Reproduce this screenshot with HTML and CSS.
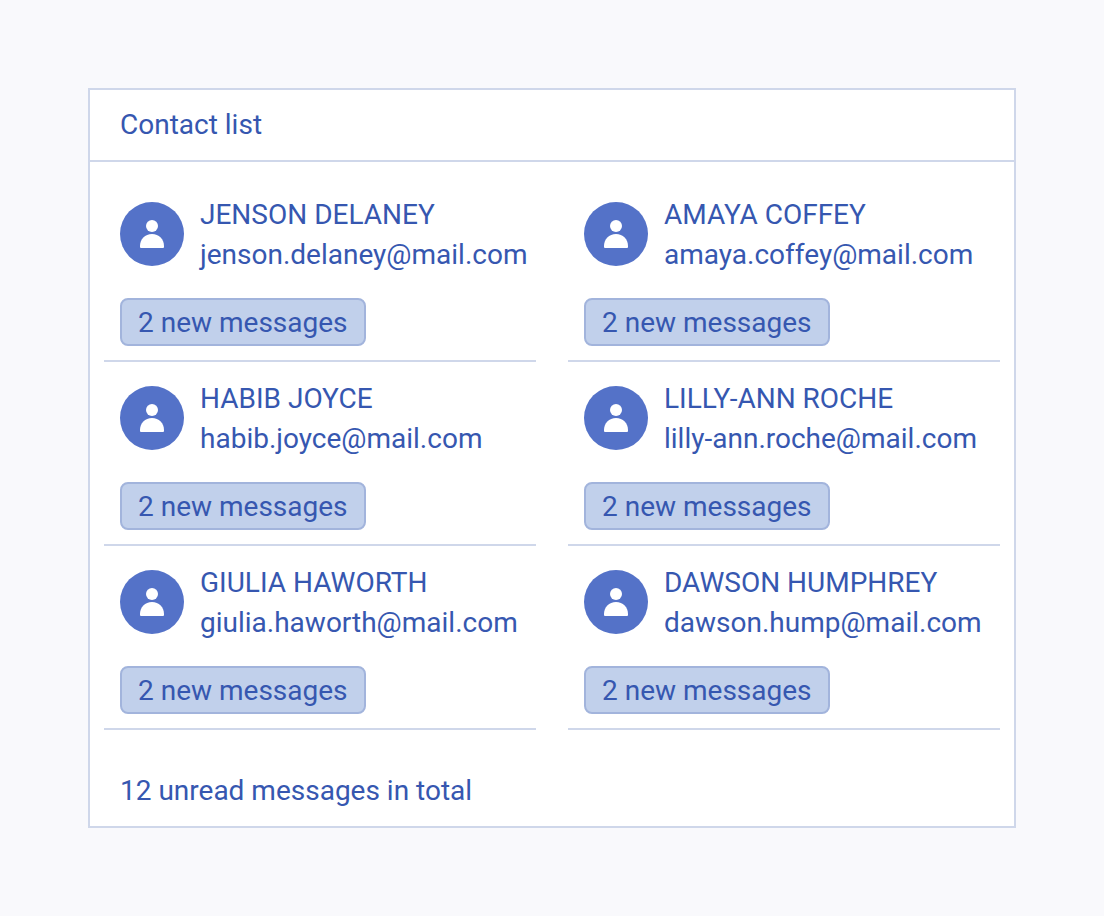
FILE: index.html
```html
<!DOCTYPE html>
<html lang="en">
<head>
<meta charset="utf-8">
<meta name="viewport" content="width=device-width, initial-scale=1">
<title>Contact list</title>
<link rel="stylesheet" href="styles.css">
</head>
<body>
<svg class="sprite" aria-hidden="true">
  <symbol id="person" viewBox="0 0 64 64">
    <circle cx="32" cy="24" r="6"/>
    <path d="M21 46q-1 0-1-1v-1c0-7 5-12 12-12s12 5 12 12v1q0 1-1 1z"/>
  </symbol>
</svg>
<main class="panel">
  <h1 class="panel-header">Contact list</h1>
  <ul class="contacts">
    <li class="contact">
      <div class="person">
        <svg class="avatar" aria-hidden="true"><use href="#person"/></svg>
        <div class="details"><div class="name">JENSON DELANEY</div><div class="email">jenson.delaney@mail.com</div></div>
      </div>
      <span class="tag">2 new messages</span>
    </li>
    <li class="contact">
      <div class="person">
        <svg class="avatar" aria-hidden="true"><use href="#person"/></svg>
        <div class="details"><div class="name">AMAYA COFFEY</div><div class="email">amaya.coffey@mail.com</div></div>
      </div>
      <span class="tag">2 new messages</span>
    </li>
    <li class="contact">
      <div class="person">
        <svg class="avatar" aria-hidden="true"><use href="#person"/></svg>
        <div class="details"><div class="name">HABIB JOYCE</div><div class="email">habib.joyce@mail.com</div></div>
      </div>
      <span class="tag">2 new messages</span>
    </li>
    <li class="contact">
      <div class="person">
        <svg class="avatar" aria-hidden="true"><use href="#person"/></svg>
        <div class="details"><div class="name">LILLY-ANN ROCHE</div><div class="email">lilly-ann.roche@mail.com</div></div>
      </div>
      <span class="tag">2 new messages</span>
    </li>
    <li class="contact">
      <div class="person">
        <svg class="avatar" aria-hidden="true"><use href="#person"/></svg>
        <div class="details"><div class="name">GIULIA HAWORTH</div><div class="email">giulia.haworth@mail.com</div></div>
      </div>
      <span class="tag">2 new messages</span>
    </li>
    <li class="contact">
      <div class="person">
        <svg class="avatar" aria-hidden="true"><use href="#person"/></svg>
        <div class="details"><div class="name">DAWSON HUMPHREY</div><div class="email">dawson.hump@mail.com</div></div>
      </div>
      <span class="tag">2 new messages</span>
    </li>
  </ul>
  <footer class="panel-footer">12 unread messages in total</footer>
</main>
</body>
</html>
```
FILE: styles.css
```css
* {
  box-sizing: border-box;
}

body {
  margin: 0;
  padding: 88px;
  background: #f9f9fc;
  color: #3657b0;
  font: 28px/40px Roboto, sans-serif;
}

.sprite {
  position: absolute;
  width: 0;
  height: 0;
}

.panel {
  background: #fff;
  border: 2px solid #cfd7ea;
}

.panel-header {
  margin: 0;
  padding: 15px 30px;
  border-bottom: 2px solid #cfd7ea;
  font: inherit;
}

.contacts {
  display: grid;
  grid-template-columns: 1fr 1fr;
  column-gap: 32px;
  margin: 0;
  padding: 16px 14px;
  list-style: none;
}

.contact {
  padding: 15px 0 14px 16px;
  border-bottom: 2px solid #cfd7ea;
}

.person {
  display: flex;
  align-items: center;
  gap: 16px;
  margin-bottom: 23px;
}

.avatar {
  flex: none;
  width: 64px;
  height: 64px;
  border-radius: 50%;
  background: #5472c8;
  fill: #fff;
}

.details {
  padding-top: 2px;
  white-space: nowrap;
}

.tag {
  display: block;
  width: fit-content;
  padding: 3px 16px 1px;
  border: 2px solid #a2b4dc;
  border-radius: 8px;
  background: #c1d0eb;
}

.panel-footer {
  padding: 25px 30px 15px;
}
```
